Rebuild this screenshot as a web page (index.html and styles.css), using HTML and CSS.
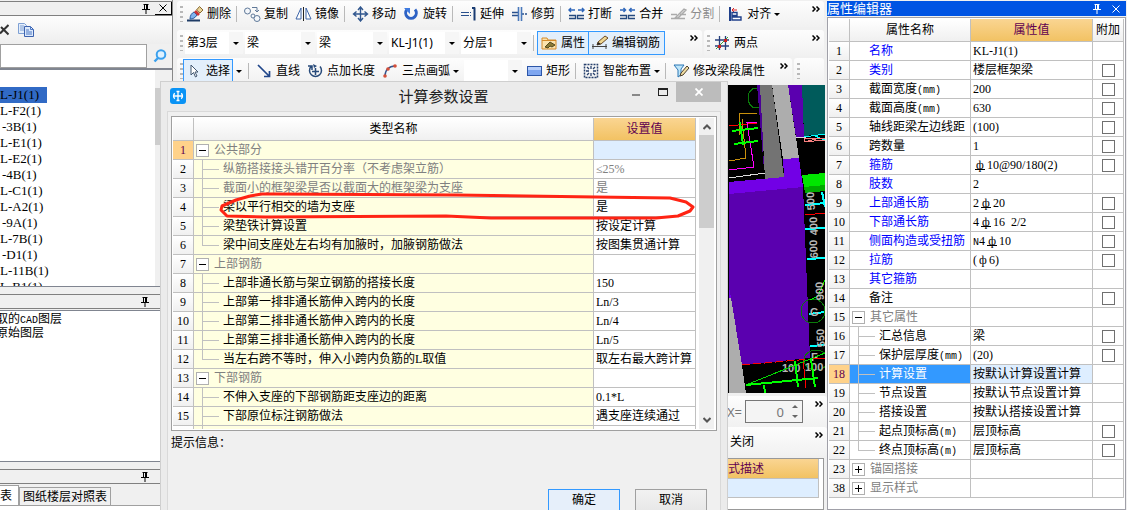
FILE: index.html
```html
<!DOCTYPE html>
<html lang="zh-CN">
<head>
<meta charset="utf-8">
<title>计算参数设置</title>
<link rel="stylesheet" href="styles.css">
</head>
<body>
<svg class="defs" aria-hidden="true">
  <symbol id="pin" viewBox="0 0 8 10"><path d="M1.500 .5h5M2.500 .5v5M5.500 .5v5M4.500 .5v5M0 5.500h8M4 6v4" fill="none" stroke="currentColor"/></symbol>
  <symbol id="more" viewBox="0 0 8 6"><path d="M.5.5 3 3 .5 5.500M4.500.5 7 3 4.500 5.500" fill="none" stroke="currentColor" stroke-width="1.500"/></symbol>
</svg>
<div class="app">
  <aside class="left">
    <header class="dock-title">
      <svg class="pin" aria-hidden="true"><use href="#pin"/></svg>
      <button class="dock-close" aria-label="关闭面板"><svg width="8" height="8" viewBox="0 0 8 8"><path d="M.5.5l7 7M7.500.5l-7 7" stroke="#000"/></svg></button>
    </header>
    <div class="left-tools">
      <button aria-label="删除构件"><svg width="9" height="12" viewBox="0 0 9 12"><path d="M0 9.500 8.500 1M1 3l7.500 7.500" stroke="#333" stroke-width="2"/></svg></button>
      <button aria-label="复制构件"><svg width="16" height="14" viewBox="0 0 16 14"><path d="M.5.5h6l2 2v8h-8z" fill="#e4eefb" stroke="#7ea0d4"/><path d="M2 3h4M2 5h4M2 7h4" stroke="#7ea0d4"/><path d="M6.500 3.500h6l3 3v7h-9z" fill="#dce9fb" stroke="#3c62ae"/><path d="M12.500 3.500v3h3M8 7h3M8 9h6M8 11h6" fill="none" stroke="#4d78c4"/></svg></button>
    </div>
    <div class="search">
      <input type="text" aria-label="搜索构件">
      <button aria-label="搜索"><svg width="14" height="14" viewBox="0 0 14 14"><circle cx="8" cy="5.500" r="4.300" fill="#dff2ff" stroke="#3aa0ee" stroke-width="2"/><path d="M5 9 1.500 12.500" stroke="#3aa0ee" stroke-width="2.400"/></svg></button>
    </div>
    <div class="members">
      <ul>
        <li><span class="chosen">L-J1(1)</span></li>
        <li>L-F2(1)</li>
        <li class="short">-3B(1)</li>
        <li>L-E1(1)</li>
        <li>L-E2(1)</li>
        <li class="short">-4B(1)</li>
        <li>L-C1(1)</li>
        <li>L-A2(1)</li>
        <li class="short">-9A(1)</li>
        <li>L-7B(1)</li>
        <li class="short">-D1(1)</li>
        <li>L-11B(1)</li>
        <li>L-B1(1)</li>
      </ul>
      <div class="bar"><i></i></div>
    </div>
    <header class="dock-title second"><svg class="pin" aria-hidden="true"><use href="#pin"/></svg></header>
    <ul class="layers">
      <li>取的<span class="mono">CAD</span>图层</li>
      <li>原始图层</li>
    </ul>
    <header class="dock-title second"><svg class="pin" aria-hidden="true"><use href="#pin"/></svg></header>
    <nav class="tabs">
      <button class="on">表</button><button>图纸楼层对照表</button>
    </nav>
    <div class="sheet"><i></i><i></i><i></i></div>
  </aside>

  <main class="center">
    <div class="toolbars">
      <div class="row">
        <div class="strip grow">
          <i class="grip"></i>
          <button class="tool"><svg viewBox="0 0 17 16"><path d="M0 14.500h13" stroke="#1f3c66" stroke-width="2"/><path d="M3 13c0-4 2-6 4-7l3 3c-2 3-4 4-7 4z" fill="#7fb4ee" stroke="#2b5a9c"/><path d="m7 6 2-2 4 4-2 2z" fill="#c33"/><path d="m9.500 4 3-3.500 3.500 3.500-3 3z" fill="#e8d49a" stroke="#8a6a30"/></svg>删除</button>
          <i class="sep"></i>
          <button class="tool"><svg viewBox="0 0 17 16"><g fill="#f4f7fb" stroke="#5f7898"><circle cx="3.500" cy="5" r="3"/><circle cx="9" cy="10" r="2"/><circle cx="13" cy="12.500" r="3"/></g><path d="M8 1.500h5v4M11 4l2 2 2-2" fill="none" stroke="#5f7898"/></svg>复制</button>
          <button class="tool"><svg viewBox="0 0 17 16"><path d="M6 2v11H1zM11 2v11h5z" fill="#fff" stroke="#3c64a8"/><path d="M8.500 1v14" stroke="#222"/></svg>镜像</button>
          <i class="sep"></i>
          <button class="tool"><svg viewBox="0 0 17 16"><path d="M8.500 1v14M1.500 8h14M6 4l2.500-3L11 4M6 12l2.500 3 2.500-3M4.500 5.500 1.500 8l3 2.500M12.500 5.500l3 2.500-3 2.500" fill="none" stroke="#31578e" stroke-width="1.400"/></svg>移动</button>
          <button class="tool"><svg viewBox="0 0 17 16"><path d="M4 3.500a5.300 5.300 0 1 0 8 0" fill="none" stroke="#2d62c4" stroke-width="3"/><path d="M1 2h6v6z" fill="#3f7be0"/></svg>旋转</button>
          <i class="sep"></i>
          <button class="tool"><svg viewBox="0 0 17 16"><path d="M1 6.500h7M1 9.500h7" stroke="#29508c"/><path d="M8 6.500h4M8 9.500h4" stroke="#29508c" stroke-dasharray="1 1"/><path d="M14.500 1.500v13M12 2h3" stroke="#1a3c72" stroke-width="2"/></svg>延伸</button>
          <button class="tool"><svg viewBox="0 0 17 16"><path d="M1 6.500h6M1 9.500h6M11 8h2M14 8h2" stroke="#29508c" stroke-width="1.400"/><path d="M7.500 1v14M10.500 1v14" stroke="#4a79bb" stroke-width="1.600"/></svg>修剪</button>
          <i class="sep"></i>
          <button class="tool"><svg viewBox="0 0 17 16"><path d="M1 4h6M3 2 1 4l2 2M10 4h6M14 2l2 2-2 2" fill="none" stroke="#2f67ba" stroke-width="1.500"/><path d="M1 9.500h6.500v3H1M16 9.500H9.500v3H16" fill="none" stroke="#24497e" stroke-width="1.300"/></svg>打断</button>
          <button class="tool"><svg viewBox="0 0 17 16"><path d="M1 4h5M4.500 2l2 2-2 2M16 4h-5M12.500 2l-2 2 2 2" fill="none" stroke="#2f67ba" stroke-width="1.500"/><path d="M1 9.500h6.500v3H1M16 9.500H9.500v3H16" fill="none" stroke="#24497e" stroke-width="1.300"/></svg>合并</button>
          <button class="tool" disabled><svg viewBox="0 0 17 16"><path d="M1 8.500h6M1 12.500h14M10 8.500h6M5 12l9-9 2 1-8 8z" fill="#ddd" stroke="#aaa" stroke-width="1.300"/></svg>分割</button>
          <i class="sep"></i>
          <button class="tool"><svg viewBox="0 0 17 16"><path d="M3 1v14" stroke="#1f3f8a" stroke-width="2"/><path d="M5 4h5M7 2 5 4l2 2" fill="none" stroke="#d22"/><path d="M5 6.500h5v3H5zM5 11h9v3H5z" fill="#fff" stroke="#1f3f8a" stroke-width="1.400"/></svg>对齐<b class="tri"></b></button>
          <svg class="more" aria-hidden="true"><use href="#more"/></svg>
        </div>
      </div>
      <div class="row">
        <div class="strip grow">
          <i class="grip"></i>
          <label class="combo first"><select aria-label="楼层"><option>第3层</option></select></label>
          <label class="combo"><select aria-label="构件类型"><option>梁</option></select></label>
          <label class="combo"><select aria-label="构件子类"><option>梁</option></select></label>
          <label class="combo"><select aria-label="构件名称"><option>KL-J1(1)</option></select></label>
          <label class="combo"><select aria-label="分层"><option>分层1</option></select></label>
          <i class="sep"></i>
          <button class="tool active"><svg viewBox="0 0 17 16"><path d="M1 3h5l1 2h8v9H1z" fill="#fbe3ae" stroke="#d58b2a"/><path d="M1 5.500h14" stroke="#d58b2a"/><path d="m4 12 5-5 5 3-3 2-2-1-2 2z" fill="#8b7a35" stroke="#544a1c"/></svg>属性</button>
          <button class="tool active join"><svg viewBox="0 0 17 16"><path d="M0 11.500h15M1 9v5M14 9v5" fill="none" stroke="#444"/><path d="m5 10 1-3 7-6 3 2-7 6z" fill="#efd690" stroke="#6b4a28"/><path d="m5 10 1-3 3 2z" fill="#222"/></svg>编辑钢筋</button>
          <svg class="more" aria-hidden="true"><use href="#more"/></svg>
        </div>
        <div class="strip pair">
          <i class="grip"></i>
          <button class="tool"><svg viewBox="0 0 17 16"><path d="M5.500 1v14M11.500 1v14M1 5h14M1 11h14" stroke="#27407c" stroke-width="1.300"/><path d="M2 14 14 2" stroke="#3a9a3a"/><path d="M4 10h3v3H4zM10 4h3v3h-3z" fill="#c22"/></svg>两点</button>
          <svg class="more" aria-hidden="true"><use href="#more"/></svg>
        </div>
      </div>
      <div class="row">
        <div class="strip grow">
          <i class="grip"></i>
          <button class="tool active pick"><svg viewBox="0 0 17 16"><path d="M5 2v10l2.500-2.500L9.500 14l1.500-1-2-4h3z" fill="#fff" stroke="#41566f"/></svg>选择</button>
          <b class="tri wide"></b>
          <i class="sep"></i>
          <button class="tool"><svg viewBox="0 0 17 16"><path d="m2 2 11 11M13.500 8v5.500H8" fill="none" stroke="#20468a" stroke-width="1.700"/></svg>直线</button>
          <button class="tool"><svg viewBox="0 0 17 16"><path d="M4 3.500a6 6 0 1 0 9 0M1 3h4v4M8.500 5v7M5 8.500h7" fill="none" stroke="#274a7a" stroke-width="1.500"/><path d="m6 1 4 2-3 2z" fill="#274a7a"/></svg>点加长度</button>
          <button class="tool"><svg viewBox="0 0 17 16"><path d="M3 13C3 7 7 3 13 3" fill="none" stroke="#35548c" stroke-width="1.400"/><g fill="#d4503a"><circle cx="3" cy="13" r="1.800"/><circle cx="6" cy="6" r="1.800"/><circle cx="13" cy="3" r="1.800"/></g></svg>三点画弧<b class="tri"></b></button>
          <label class="combo blank"><select aria-label="绘图方式"><option></option></select></label>
          <button class="tool"><svg viewBox="0 0 17 16"><rect x="1.500" y="3.500" width="14" height="9" fill="#7ea6f0" stroke="#2c56a8"/><path d="M2 4h13v3H2z" fill="#b8cffa"/></svg>矩形</button>
          <i class="sep"></i>
          <button class="tool"><svg viewBox="0 0 17 16"><rect x="1.500" y="1.500" width="13" height="13" fill="none" stroke="#27406c" stroke-dasharray="2 1" stroke-width="1.500"/><path d="M8 3v3M8 10v3M3 8h3M10 8h3M4 4l2 2M12 4l-2 2M4 12l2-2M12 12l-2-2" stroke="#27406c" stroke-width="1.300"/></svg>智能布置<b class="tri"></b></button>
          <i class="sep"></i>
          <button class="tool"><svg viewBox="0 0 17 16"><path d="M1 2h10L8 6v6l-3 2V7z" fill="#bfe6fa" stroke="#2b76b4"/><path d="m7 13 1-3 6-7 2 2-6 7z" fill="#f1dda0" stroke="#4a4030"/></svg>修改梁段属性</button>
          <svg class="more" aria-hidden="true"><use href="#more"/></svg>
        </div>
        <div class="strip tail"><i class="grip"></i></div>
      </div>
    </div>

    <div class="viewport">
      <svg width="96" height="308" viewBox="0 0 96 308" shape-rendering="crispEdges">
        <rect width="96" height="308" fill="#000"/>
        <ellipse cx="27" cy="13" rx="8" ry="10" fill="none" stroke="#0a7a0a"/>
        <path d="M10 50V29l18-1M13 34l4 39-17 3" fill="none" stroke="#c8900c"/>
        <path d="M0 41l28-3" stroke="#f00"/>
        <path d="M17 37h11M18 38l7 44-25 3" fill="none" stroke="#f0f"/>
        <path d="M0 93l36-5" stroke="#ddd"/>
        <path d="M3 46l26-3M5 59l24-3M11 37l3 23" stroke="#0f0" stroke-width="2"/>
        <path d="M28 0h4l3 85z" fill="#4a0096"/>
        <path d="M31 0h12l12 92-19 2z" fill="#737373"/>
        <path d="M43 0h16l11 73-16 1z" fill="#adadad"/>
        <path d="M59 0h14l2 52h-8z" fill="#5a00af"/>
        <path d="M73 0h23v49l-21 2z" fill="#005b5b"/>
        <path d="M67 52h10" stroke="#ddd"/>
        <path d="M75 52l21-3M86 51l10 4" stroke="#0ff"/>
        <path d="M75 54l21-1M75 57l21-2M75 54v3l16-4" fill="none" stroke="#f98080"/>
        <path d="M73 90l23-2v12l-21 2z" fill="#00e600"/>
        <path d="M75 102l21-2v6l-20 2z" fill="#00aa00"/>
        <path d="M54 74l16-1 4 29-74 7V97l55-5z" fill="#7200e6"/>
        <path d="M0 109l74-7 7 171-68 7L2 213l-2-11z" fill="#5a00af"/>
        <path d="M0 202l2 11H0z" fill="#7200e6"/>
        <path d="M0 213h2l11 67 4 28H0z" fill="#adadad"/>
        <path d="M76 120l20-2M93 107l3 15M76 144l20-1M78 174l18-1M80 229l16-2M81 261l15-1" stroke="#0ff" stroke-width="2"/>
        <path d="M76 130l20-2" stroke="#f00"/>
        <circle cx="84" cy="226" r="12" fill="none" stroke="#0a7a0a"/>
        <ellipse cx="87" cy="275" rx="12" ry="10" fill="none" stroke="#0a7a0a"/>
        <path d="M81 215l8-4 7-16" fill="none" stroke="#0f0"/>
        <g fill="#b8b8b8" class="dims">
          <text transform="translate(86 125) rotate(-94)">500</text>
          <text transform="translate(89 150) rotate(-94)">400</text>
          <text transform="translate(89 173) rotate(-94)">600</text>
          <text transform="translate(95 215) rotate(-94)">900</text>
          <text transform="translate(96 262) rotate(-94)">550</text>
          <text x="81" y="231">G</text><text x="82" y="276">F</text>
          <text x="53" y="287">100</text><text x="76" y="286">100</text>
        </g>
        <path d="M13 280l68-6" stroke="#f00" stroke-dasharray="8 3"/>
        <path d="M74 274l3 29M81 273h15" stroke="#f00" fill="none"/>
        <path d="M17 300l79-32" stroke="#0d0"/>
        <path d="M17 300l72-7M35 300l1 8M66 276l3 26M82 274l4 28" stroke="#0f0" stroke-width="2" fill="none"/>
      </svg>
    </div>

    <div class="coords strip">
      <label for="xval">X=</label>
      <span class="spin"><input id="xval" type="text" value="0"><i class="up"></i><i class="down"></i></span>
      <svg class="more" aria-hidden="true"><use href="#more"/></svg>
    </div>
    <div class="closer strip">
      <button>关闭</button>
      <svg class="more" aria-hidden="true"><use href="#more"/></svg>
    </div>
    <div class="desc">
      <table><tr><th>公式描述</th></tr><tr><td></td></tr></table>
    </div>
  </main>

  <aside class="right">
    <header class="prop-title"><h2>属性编辑器</h2>
      <svg class="pin" aria-hidden="true"><use href="#pin"/></svg>
      <button aria-label="关闭属性编辑器"><svg width="8" height="8" viewBox="0 0 8 8"><path d="M.5.5l7 7M7.500.5l-7 7" stroke="#fff"/></svg></button>
    </header>
    <div class="prop-box">
      <table class="grid props">
        <colgroup><col class="c-no"><col class="c-name"><col><col class="c-add"></colgroup>
        <thead><tr><th></th><th>属性名称</th><th class="gold">属性值</th><th>附加</th></tr></thead>
        <tbody>
          <tr><th>1</th><td class="blue">名称</td><td>KL-J1(1)</td><td></td></tr>
          <tr><th>2</th><td class="blue">类别</td><td>楼层框架梁</td><td><input type="checkbox" aria-label="类别附加"></td></tr>
          <tr><th>3</th><td>截面宽度<span class="mono">(mm)</span></td><td>200</td><td><input type="checkbox" aria-label="截面宽度附加"></td></tr>
          <tr><th>4</th><td>截面高度<span class="mono">(mm)</span></td><td>630</td><td><input type="checkbox" aria-label="截面高度附加"></td></tr>
          <tr><th>5</th><td>轴线距梁左边线距</td><td>(100)</td><td><input type="checkbox" aria-label="轴线距附加"></td></tr>
          <tr><th>6</th><td>跨数量</td><td>1</td><td><input type="checkbox" aria-label="跨数量附加"></td></tr>
          <tr><th>7</th><td class="blue">箍筋</td><td><span class="bar-sign">ф</span>10@90/180(2)</td><td><input type="checkbox" aria-label="箍筋附加"></td></tr>
          <tr><th>8</th><td class="blue">肢数</td><td>2</td><td></td></tr>
          <tr><th>9</th><td class="blue">上部通长筋</td><td>2<span class="bar-sign">ф</span>20</td><td><input type="checkbox" aria-label="上部通长筋附加"></td></tr>
          <tr><th>10</th><td class="blue">下部通长筋</td><td>4<span class="bar-sign">ф</span>16&nbsp; 2/2</td><td><input type="checkbox" aria-label="下部通长筋附加"></td></tr>
          <tr><th>11</th><td class="blue">侧面构造或受扭筋</td><td><span class="mono">N</span>4<span class="bar-sign">ф</span>10</td><td><input type="checkbox" aria-label="侧面筋附加"></td></tr>
          <tr><th>12</th><td class="blue">拉筋</td><td>(<span class="bar-sign plain">ф</span>6)</td><td><input type="checkbox" aria-label="拉筋附加"></td></tr>
          <tr><th>13</th><td class="blue">其它箍筋</td><td></td><td></td></tr>
          <tr><th>14</th><td>备注</td><td></td><td><input type="checkbox" aria-label="备注附加"></td></tr>
          <tr><th>15</th><td class="group"><button class="fold" aria-label="折叠"></button>其它属性</td><td></td><td></td></tr>
          <tr><th>16</th><td class="child">汇总信息</td><td>梁</td><td><input type="checkbox" aria-label="汇总信息附加"></td></tr>
          <tr><th>17</th><td class="child">保护层厚度<span class="mono">(mm)</span></td><td>(20)</td><td><input type="checkbox" aria-label="保护层厚度附加"></td></tr>
          <tr class="sel"><th>18</th><td class="child">计算设置</td><td>按默认计算设置计算</td><td></td></tr>
          <tr><th>19</th><td class="child">节点设置</td><td>按默认节点设置计算</td><td></td></tr>
          <tr><th>20</th><td class="child">搭接设置</td><td>按默认搭接设置计算</td><td></td></tr>
          <tr><th>21</th><td class="child">起点顶标高<span class="mono">(m)</span></td><td>层顶标高</td><td><input type="checkbox" aria-label="起点顶标高附加"></td></tr>
          <tr><th>22</th><td class="child last">终点顶标高<span class="mono">(m)</span></td><td>层顶标高</td><td><input type="checkbox" aria-label="终点顶标高附加"></td></tr>
          <tr><th>23</th><td class="group"><button class="fold closed" aria-label="展开"></button>锚固搭接</td><td></td><td></td></tr>
          <tr><th>38</th><td class="group"><button class="fold closed" aria-label="展开"></button>显示样式</td><td></td><td></td></tr>
        </tbody>
      </table>
    </div>
  </aside>

  <section class="dialog" role="dialog" aria-labelledby="dlg-title">
    <header class="dlg-head">
      <svg class="logo" width="16" height="16" viewBox="0 0 16 16"><rect width="16" height="16" rx="3" fill="#0a93f5"/><path d="M8 3v10M3 8h10M5 5.500C3 6 3 10 5 10.500M11 5.500c2 .5 2 4.500 0 5M6.500 3.500h3M6.500 12.500h3" fill="none" stroke="#fff" stroke-width="1.300"/></svg>
      <h1 id="dlg-title">计算参数设置</h1>
      <button class="win min" aria-label="最小化"><i></i></button>
      <button class="win max" aria-label="最大化"><i></i></button>
      <button class="win close" aria-label="关闭"><svg width="8" height="8" viewBox="0 0 8 8"><path d="M.5.5l7 7M7.500.5l-7 7" stroke="#fff" stroke-width="1.800"/></svg></button>
    </header>
    <div class="dlg-body">
      <div class="calc">
        <div class="calc-view">
          <table class="grid params">
            <colgroup><col class="c-no"><col><col class="c-val"></colgroup>
            <thead><tr><th></th><th>类型名称</th><th class="gold">设置值</th></tr></thead>
            <tbody>
              <tr class="cur"><th>1</th><td class="group"><button class="fold" aria-label="折叠"></button>公共部分</td><td></td></tr>
              <tr class="dim"><th>2</th><td class="child">纵筋搭接接头错开百分率（不考虑架立筋）</td><td>≤25%</td></tr>
              <tr class="dim"><th>3</th><td class="child">截面小的框架梁是否以截面大的框架梁为支座</td><td>是</td></tr>
              <tr><th>4</th><td class="child">梁以平行相交的墙为支座</td><td>是</td></tr>
              <tr><th>5</th><td class="child">梁垫铁计算设置</td><td>按设定计算</td></tr>
              <tr><th>6</th><td class="child last">梁中间支座处左右均有加腋时，加腋钢筋做法</td><td>按图集贯通计算</td></tr>
              <tr><th>7</th><td class="group"><button class="fold" aria-label="折叠"></button>上部钢筋</td><td></td></tr>
              <tr><th>8</th><td class="child">上部非通长筋与架立钢筋的搭接长度</td><td>150</td></tr>
              <tr><th>9</th><td class="child">上部第一排非通长筋伸入跨内的长度</td><td>Ln/3</td></tr>
              <tr><th>10</th><td class="child">上部第二排非通长筋伸入跨内的长度</td><td>Ln/4</td></tr>
              <tr><th>11</th><td class="child">上部第三排非通长筋伸入跨内的长度</td><td>Ln/5</td></tr>
              <tr><th>12</th><td class="child last">当左右跨不等时，伸入小跨内负筋的L取值</td><td>取左右最大跨计算</td></tr>
              <tr><th>13</th><td class="group"><button class="fold" aria-label="折叠"></button>下部钢筋</td><td></td></tr>
              <tr><th>14</th><td class="child">不伸入支座的下部钢筋距支座边的距离</td><td>0.1*L</td></tr>
              <tr><th>15</th><td class="child">下部原位标注钢筋做法</td><td>遇支座连续通过</td></tr>
              <tr><th></th><td class="child"></td><td></td></tr>
            </tbody>
          </table>
        </div>
        <div class="vscroll">
          <svg width="8" height="6" viewBox="0 0 8 6"><path d="M.5 5 4 1.500 7.500 5" fill="none" stroke="#555" stroke-width="2"/></svg>
          <i></i>
          <svg width="8" height="6" viewBox="0 0 8 6"><path d="M.5 1 4 4.500 7.500 1" fill="none" stroke="#555" stroke-width="2"/></svg>
        </div>
        <svg class="mark" width="480" height="30" viewBox="0 0 480 30" aria-hidden="true"><path d="M34 6 20 10 6 16 5 20 11 26 50 27 230 26 275 28 440 28 462 26 474 21 477 17 470 12 454 8 380 7 240 5 60 4 46 4 34 6" fill="none" stroke="#ff2414" stroke-width="3" stroke-linejoin="round"/></svg>
      </div>
      <p class="hint">提示信息：</p>
      <div class="actions"><button class="ok">确定</button><button>取消</button></div>
    </div>
  </section>
</div>
</body>
</html>
```
FILE: styles.css
```css
* { box-sizing: border-box; }

body {
  margin: 0;
  height: 100vh;
  overflow: hidden;
  background: #f0f0f0;
  color: #000;
  font: 12px/18px "Liberation Serif", "Noto Sans CJK SC", sans-serif;
}

button, input, select {
  margin: 0;
  padding: 0;
  border: 0;
  background: none;
  color: inherit;
  font: inherit;
}

svg { display: block; flex: none; }
ul { margin: 0; padding: 0; list-style: none; }
h1, h2, p { margin: 0; font-weight: normal; }

.defs { position: absolute; width: 0; height: 0; }
.mono { font-family: "Liberation Mono", monospace; font-size: 10px; line-height: 10px; }
.pin { width: 8px; height: 10px; }
.more { width: 8px; height: 6px; margin: 5px 4px 0 auto; align-self: flex-start; }

.app { position: relative; display: flex; height: 100%; }

/* left dock */
.left {
  display: flex;
  flex-direction: column;
  flex: none;
  width: 173px;
  padding-top: 1px;
  border-right: 1px solid #888;
  white-space: nowrap;
  overflow: hidden;
}

.dock-title {
  display: flex;
  flex: none;
  align-items: center;
  justify-content: flex-end;
  gap: 5px;
  height: 15px;
  border: 1px solid #808080;
  border-width: 1px 0;
}
.dock-title.second { margin-top: 7px; padding-right: 23px; }
.dock-close {
  display: grid;
  place-items: center;
  width: 17px;
  height: 13px;
  border: 1px solid #000;
  border-width: 0 1px 1px 0;
}

.left-tools {
  display: flex;
  align-items: center;
  gap: 9px;
  flex: none;
  height: 28px;
  background: linear-gradient(#fdfdfd, #eee);
}

.search { display: flex; flex: none; height: 26px; border-bottom: 2px solid #808590; }
.search input { flex: 1; min-width: 0; border: 1px solid #a0a0a0; background: #fff; }
.search button { display: grid; place-items: center; width: 25px; }

.members {
  display: flex;
  justify-content: space-between;
  flex: none;
  height: 217px;
  border-bottom: 1px solid #808590;
  background: #fff;
  overflow: hidden;
  font-size: 13px;
  line-height: 16px;
}
.members ul { padding-top: 17px; }
.members .short { padding-left: 2px; }
.chosen { display: block; width: 47px; background: #316ac5; }
.members .bar { width: 17px; padding-top: 18px; background: #f0f0f0; }
.members .bar i { display: block; height: 57px; background: #cdcdcd; }

.layers {
  flex: none;
  height: 152px;
  padding-top: 1px;
  border: 1px solid #808590;
  border-width: 1px 0;
  margin-top: 1px;
  background: #fff;
  line-height: 14px;
}
.layers li { margin-left: -4px; }

.tabs {
  display: flex;
  flex: none;
  align-items: flex-end;
  height: 22px;
  border-bottom: 1px solid #a0a0a0;
}
.tabs button {
  height: 18px;
  padding: 0 3px;
  border: 1px solid #a0a0a0;
  border-bottom: 0;
  line-height: 16px;
}
.tabs .on { width: 19px; height: 20px; padding: 0 6px 0 0; border-left: 0; background: #fff; }
.sheet { display: flex; flex: 1; padding-top: 4px; background: #fff; }
.sheet i { width: 57px; border: 1px solid #a0a0a0; border-width: 1px 1px 0 0; background: #f0f0f0; }
.sheet i:first-child { width: 6px; }

/* toolbars */
.center {
  display: flex;
  flex-direction: column;
  flex: 1;
  min-width: 0;
  font-family: "Noto Sans", "Noto Sans CJK SC", sans-serif;
}
.toolbars { flex: none; display: grid; gap: 2px; padding: 1px 3px 0 4px; height: 85px; }
.row { display: flex; gap: 2px; height: 26px; min-width: 0; }
.strip {
  display: flex;
  align-items: center;
  border-radius: 3px;
  background: linear-gradient(#fdfdfd, #f1f1f1);
  white-space: nowrap;
}
.grow { flex: 1; min-width: 0; }
.pair { width: 120px; }
.tail { width: 30px; }
.grip {
  flex: none;
  width: 3px;
  height: 16px;
  margin: 0 0 0 3px;
  background: repeating-linear-gradient(#b8b8b8 0 2px, transparent 2px 5px);
}
.sep { flex: none; width: 1px; height: 16px; margin: 0 3px 0 2px; background: #b9b9b9; }
.tool {
  display: flex;
  flex: none;
  align-items: center;
  gap: 3px;
  height: 24px;
  padding: 0 3px 0 4px;
}
.tool svg { width: 17px; height: 16px; }
.tool:disabled { color: #8c8c8c; }
.tool.active { padding: 0 3px; border: 1px solid #3399ff; background: #e3effb; }
.tool.join { margin-left: -1px; padding: 0 4px 0 3px; }
.tool.pick { padding: 0 2px; }
.tri {
  width: 0;
  height: 0;
  border: 3px solid transparent;
  border-top-color: #000;
  border-bottom: 0;
}
.tri.wide { margin: 0 4px 0 3px; }

.combo {
  display: flex;
  position: relative;
  flex: none;
  width: 70px;
  height: 22px;
  margin-left: 2px;
  background: linear-gradient(90deg, #fff 56px, #f6f6f6 56px);
}
.combo.first { width: 58px; background: linear-gradient(90deg, #fff 44px, #f6f6f6 44px); }
.combo.blank { width: 58px; background: linear-gradient(90deg, #fff 44px, #f6f6f6 44px); }
.combo select { appearance: none; flex: 1; min-width: 0; padding: 0 12px 0 2px; }
.combo::after {
  content: "";
  position: absolute;
  right: 4px;
  top: 10px;
  border: 3px solid transparent;
  border-top-color: #000;
  border-bottom: 0;
}

/* model view and bars under it */
.viewport { display: flex; flex: none; justify-content: flex-end; background: #000; margin-right: 2px; }
.dims { font: bold 11px "Liberation Sans", sans-serif; }
.coords {
  flex: none;
  height: 31px;
  margin-top: 3px;
  padding-left: 554px;
}
.coords label, .spin { color: #777; }
.coords label { width: 18px; font-size: 13px; }
.spin {
  position: relative;
  display: flex;
  width: 58px;
  height: 23px;
  border: 1px solid #777;
  background: #f4f4f4;
}
.spin input { flex: 1; min-width: 0; padding-right: 18px; text-align: right; font-size: 13px; }
.spin i { position: absolute; right: 4px; border: 3px solid transparent; }
.spin .up { top: 4px; border-top: 0; border-bottom-color: #666; }
.spin .down { bottom: 4px; border-bottom: 0; border-top-color: #666; }
.closer { flex: none; height: 29px; padding-left: 557px; }
.desc { flex: 1; margin: 2px 3px 0 0; border: 1px solid #999; background: #fff; }
.desc table { width: calc(100% - 4px); border-spacing: 0; }
.desc th {
  height: 20px;
  padding: 0 0 0 542px;
  border: 1px solid #c0c0c0;
  border-width: 0 1px 1px 0;
  background: linear-gradient(#fad592, #f2c263);
  color: #600050;
  font-weight: normal;
  text-align: left;
}
.desc td { height: 19px; padding: 0; border: 1px solid #c0c0c0; border-width: 0 1px 1px 0; background: #deeeff; }

/* shared data grid */
.grid { width: 100%; table-layout: fixed; border-spacing: 0; }
.grid th, .grid td {
  height: 19px;
  padding: 0 2px;
  border: 1px solid #c0c0c0;
  border-width: 0 1px 1px 0;
  font-weight: normal;
  line-height: 17px;
  text-align: left;
  white-space: nowrap;
  overflow: hidden;
}
.grid th { padding: 0; background: linear-gradient(#fff, #f0f0f0); text-align: center; }
.grid thead th { height: 23px; }
.grid .gold { background: linear-gradient(#fad592, #f2c263); color: #600050; }
.grid .group { padding-left: 2px; color: #808080; }
.grid .child {
  padding-left: 29px;
  background-image: linear-gradient(#c0c0c0, #c0c0c0), linear-gradient(#c0c0c0, #c0c0c0);
  background-position: 8px 0, 8px 9px;
  background-repeat: no-repeat;
  background-size: 1px 100%, 17px 1px;
}
.grid .last { background-size: 1px 9px, 17px 1px; }
.fold {
  width: 13px;
  height: 13px;
  margin-right: 5px;
  border: 1px solid #b0b0b0;
  background: linear-gradient(#000, #000) center / 7px 1px no-repeat, #fff;
  vertical-align: middle;
}
.fold.closed {
  background: linear-gradient(#000, #000) center / 7px 1px no-repeat, linear-gradient(#000, #000) center / 1px 7px no-repeat, #fff;
}
.c-no { width: 21px; }

/* property editor */
.right { display: flex; flex-direction: column; flex: none; width: 300px; padding: 1px 1px 0 0; }
.prop-title {
  display: flex;
  flex: none;
  align-items: center;
  gap: 11px;
  height: 15px;
  padding: 0 6px 0 0;
  background: #0054e3;
  color: #fff;
}
.prop-title h2 { flex: 1; font-size: 13px; line-height: 15px; }
.prop-box { flex: 1; margin-top: 1px; padding: 1px 1px 0 1px; border: 1px solid #a0a0a8; background: #fff; }
.props td:nth-child(2) { padding-left: 19px; }
.props .c-name { width: 121px; }
.props .c-add { width: 31px; }
.props td.group:nth-child(2) { padding-left: 2px; }
.props td.child:nth-child(2) { padding-left: 29px; }
.props .blue { color: #0000ff; }
.props td:last-child { padding: 0; text-align: center; }
.props input {
  appearance: none;
  display: block;
  width: 13px;
  height: 13px;
  margin: 1px auto 0;
  border: 1px solid #707070;
  background: #fff;
}
.props .sel td:nth-child(2) { background-color: #3399ff; color: #fff; }
.props .sel td:nth-child(3) { background: #deeeff; }
.grid .sel th, .grid .cur th { background: #ffd28a; color: #600050; }
.bar-sign {
  display: inline-block;
  width: 14px;
  background: linear-gradient(#000, #000) center 10px / 10px 1px no-repeat;
  line-height: 13px;
  text-align: center;
}
.bar-sign.plain { width: 12px; background: none; }

/* settings dialog */
.dialog {
  position: absolute;
  display: flex;
  flex-direction: column;
  left: 160px;
  top: 81px;
  bottom: 0;
  width: 568px;
  border: 1px solid #cfcfcf;
  border-bottom: 0;
  background: #ebebeb;
}
.dlg-head { display: flex; flex: none; height: 29px; padding: 0 6px 0 9px; }
.logo { margin-top: 6px; }
.dlg-head h1 {
  flex: 1;
  padding-left: 79px;
  font: 15px/28px "Noto Sans CJK SC", sans-serif;
  color: #222;
  text-align: center;
}
.win { display: grid; place-items: center; width: 27px; height: 20px; }
.win.close { width: 45px; background: #bcbcbc; }
.min i { width: 8px; height: 2px; margin-top: 6px; background: #888; }
.max i { width: 10px; height: 8px; border: 1px solid #222; border-top-width: 2px; }
.dlg-body {
  display: flex;
  flex-direction: column;
  flex: 1;
  margin: 0 6px;
  padding: 4px 3px 0;
  border: 1px solid #d9d9d9;
  border-bottom: 0;
  background: #f0f0f0;
}
.calc { position: relative; display: flex; height: 315px; padding: 1px; border: 1px solid #a0a0a0; background: #fff; }
.calc-view { flex: 1; overflow: hidden; }
.params .c-val { width: 102px; }
.params td:nth-child(2) { background-color: #ffffe1; }
.params .cur td:nth-child(3) { background: #deeeff; }
.params .dim td { color: #808080; }
.vscroll {
  display: flex;
  flex-direction: column;
  align-items: center;
  width: 15px;
  margin: 0 1px 0 3px;
  padding: 6px 0;
  background: #f0f0f0;
}
.vscroll i { width: 15px; height: 93px; margin: 5px 0 auto; background: #cdcdcd; }
.mark { position: absolute; left: 44px; top: 73px; }
.hint { margin-top: 3px; }
.actions { display: flex; justify-content: flex-end; gap: 15px; margin-top: auto; padding-right: 10px; }
.actions button { width: 72px; height: 21px; border: 1px solid #a0a0a0; border-bottom: 0; background: linear-gradient(#f2f2f2, #e8e8e8); line-height: 20px; }
.actions .ok { border-color: #3399ff; background: #e6effa; }
```
